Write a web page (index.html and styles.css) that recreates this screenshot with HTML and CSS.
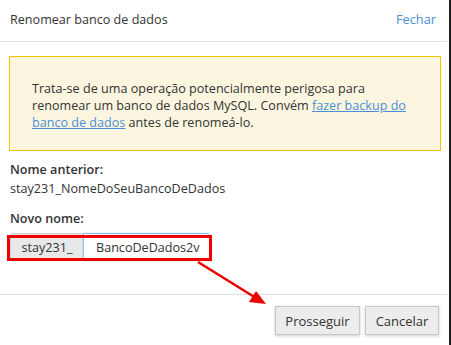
FILE: index.html
```html
<!DOCTYPE html>
<html lang="pt">
  <head>
    <meta charset="UTF-8" />
    <title>Renomear banco de dados</title>
    <link rel="stylesheet" href="styles.css">
  </head>
  <body>
    <div class="dialog">
      <div class="header">
        <span class="title">Renomear banco de dados</span>
        <a class="close" href="#">Fechar</a>
      </div>
      <div class="content">
        <div class="alert">
          Trata-se de uma operação potencialmente perigosa para
          renomear um banco de dados MySQL. Convém <a href="#">fazer backup do
          banco de dados</a> antes de renomeá-lo.
        </div>
        <div class="label">Nome anterior:</div>
        <div class="value">stay231_NomeDoSeuBancoDeDados</div>
        <div class="label label-new">Novo nome:</div>
        <div class="input-group">
          <span class="prefix">stay231_</span>
          <span class="input">BancoDeDados2v</span>
          <span class="mark"></span>
        </div>
      </div>
      <div class="footer">
        <button class="btn btn-go">Prosseguir</button>
        <button class="btn btn-cancel">Cancelar</button>
      </div>
      <svg class="arrow" width="80" height="50" viewBox="0 0 80 50">
        <line x1="2" y1="2" x2="60" y2="38" stroke="#ee0000" stroke-width="2.6" />
        <polygon points="70,44 53,42 60,31" fill="#ee0000" />
      </svg>
    </div>
  </body>
</html>
```

FILE: styles.css
```css
body {
  margin: 0;
  padding: 0;
  background: white;
  font-family: "Open Sans", "Noto Sans", sans-serif;
  font-size: 12.6px;
  color: #333;
}
.dialog {
  position: relative;
  width: 449px;
  height: 345px;
  border-right: 2px solid #1e1e1e;
  display: flex;
  flex-direction: column;
}
.header {
  height: 42px;
  margin-right: 2px;
  padding: 0 11px 0 10px;
  display: flex;
  align-items: center;
  justify-content: space-between;
  border-bottom: 1px solid #e3e3e3;
  box-sizing: border-box;
}
.title {
  font-size: 12.6px;
  color: #333;
  margin-top: -3px;
}
.close {
  font-size: 12.8px;
  color: #4a8fd6;
  text-decoration: none;
  margin-top: -3px;
}
.content {
  padding: 14px 8px 0 10px;
}
.alert {
  background: #fcf6e0;
  border: 1px solid #f2c500;
  margin-left: -1px;
  padding: 23px 22px 19px;
  line-height: 17px;
}
.alert a {
  color: #4a8fd6;
}
.label {
  font-weight: 600;
  margin-top: 10px;
  line-height: 18px;
}
.value {
  line-height: 18px;
  margin-top: 1px;
}
.label-new {
  margin-top: 12px;
}
.input-group {
  position: relative;
  display: flex;
  width: 200px;
  height: 28px;
  margin-top: 5px;
}
.prefix {
  width: 73px;
  background: #e8e8e8;
  border: 1px solid #d0d0d0;
  border-right: none;
  box-sizing: border-box;
  display: flex;
  align-items: center;
  justify-content: center;
  border-radius: 3px 0 0 3px;
}
.input {
  flex: 1;
  border: 1px solid #8fbfe6;
  box-sizing: border-box;
  display: flex;
  align-items: center;
  padding-left: 12px;
  border-radius: 0 3px 3px 0;
  box-shadow: 0 0 2px rgba(102, 175, 233, 0.5);
}
.mark {
  position: absolute;
  left: -3px;
  top: 2px;
  width: 205px;
  height: 26px;
  border: 3px solid #ee0000;
  box-sizing: border-box;
}
.footer {
  margin-top: auto;
  margin-right: 2px;
  height: 51px;
  border-top: 1px solid #e0e0e0;
  display: flex;
  justify-content: flex-end;
  align-items: flex-start;
  gap: 5px;
  padding: 11px 8px 0 0;
  box-sizing: border-box;
}
.btn {
  font-family: "Open Sans", "Noto Sans", sans-serif;
  font-size: 13px;
  color: #333;
  background: #ececec;
  border: 1px solid #c8c8c8;
  height: 29px;
  padding: 0;
  box-shadow: 0 1px 3px rgba(0, 0, 0, 0.2);
}
.btn-go {
  width: 85px;
}
.btn-cancel {
  width: 74px;
}
.arrow {
  position: absolute;
  left: 196px;
  top: 260px;
}
```
